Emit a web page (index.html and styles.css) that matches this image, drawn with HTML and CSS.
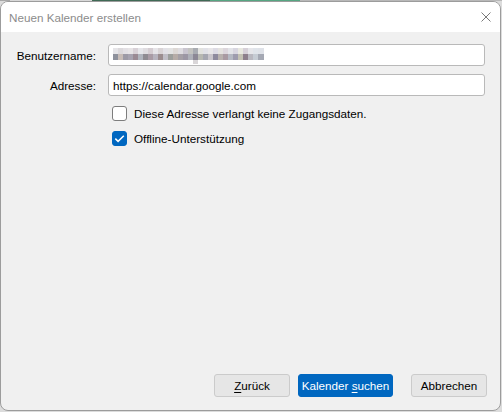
FILE: index.html
```html
<!DOCTYPE html>
<html lang="de">
<head>
<meta charset="utf-8">
<title>Neuen Kalender erstellen</title>
<link rel="stylesheet" href="styles.css">
</head>
<body>
<div class="desk-strip"></div>
<div class="window">
  <header class="titlebar">
    <span class="title">Neuen Kalender erstellen</span>
    <svg class="close" width="10" height="10" viewBox="0 0 10 10" aria-hidden="true">
      <path d="M0.5 0.5 L9.5 9.5 M9.5 0.5 L0.5 9.5" stroke="#7a7a7a" stroke-width="1" fill="none"/>
    </svg>
  </header>
  <main class="content">
    <div class="form">
      <label class="label" for="user">Benutzername:</label>
      <div class="field" id="user"><span class="mosaic"></span></div>
      <label class="label" for="addr">Adresse:</label>
      <div class="field" id="addr">https://calendar.google.com</div>
    </div>
    <div class="checks">
      <div class="check"><span class="box"></span><span>Diese Adresse verlangt keine Zugangsdaten.</span></div>
      <div class="check"><span class="box checked"><svg width="15" height="15" viewBox="0 0 15 15"><path d="M3.3 7.6 L6.1 10.4 L11.8 4.7" stroke="#fff" stroke-width="1.5" fill="none"/></svg></span><span>Offline-Unterstützung</span></div>
    </div>
  </main>
  <footer class="buttons">
    <button class="btn"><u>Z</u>urück</button>
    <button class="btn primary">Kalender <u>s</u>uchen</button>
    <button class="btn cancel">Abbrechen</button>
  </footer>
</div>
</body>
</html>
```

FILE: styles.css
```css
html, body {
  margin: 0;
  padding: 0;
}

body {
  width: 502px;
  height: 412px;
  background: #dcdcdc;
  font-family: "Segoe UI", "Liberation Sans", Arial, sans-serif;
  font-size: 11.7px;
  color: #000;
  overflow: hidden;
}

/* sliver of the window lying behind the dialog */
.desk-strip {
  height: 1px;
  background: linear-gradient(to right, #a8a8a8 0 10px, #d8d8d8 10px 92px, #3f6a55 92px 210px, #56a682 210px 300px, #b8b8b8 300px);
}

.window {
  box-sizing: border-box;
  width: 501px;
  height: 410px;
  border: 1px solid #9c9c9c;
  border-radius: 8px;
  background: #f0f0f0;
  overflow: hidden;
  display: flex;
  flex-direction: column;
}

.titlebar {
  height: 30px;
  background: #fff;
  display: flex;
  align-items: center;
  justify-content: space-between;
  padding: 0 9px 0 8px;
  flex: none;
}

.title {
  color: #8c8c8c;
  padding-top: 1px;
}

.close {
  display: block;
}

.content {
  flex: 1;
  padding-top: 12px;
}

.form {
  display: grid;
  grid-template-columns: 87px 1fr;
  column-gap: 12px;
  row-gap: 8px;
  padding: 0 15px 0 8px;
  align-items: center;
}

.label {
  text-align: right;
}

.field {
  box-sizing: border-box;
  height: 22px;
  border: 1px solid #b9b9b9;
  border-radius: 3px;
  background: #fff;
  padding: 0 4px;
  display: flex;
  align-items: center;
}

/* pixelated user name */
.mosaic {
  display: block;
  width: 151px;
  height: 16px;
  margin-top: 2px;
  background:
    linear-gradient(to right, transparent 0 80px, #d9d6d8 80px 85px, transparent 85px) 0 12px / 100% 4px no-repeat,
    linear-gradient(to right,
      #8e919c 0 5px, #c7bcb7 5px 10px, #9d9aa6 10px 15px, #a7a3b0 15px 20px, #9a8a94 20px 25px,
      #b0b4bd 25px 30px, #8f8b92 30px 35px, #a99ba5 35px 40px, #b7b3be 40px 45px, #9b8d8f 45px 50px,
      #c0bec6 50px 55px, #9d9f9c 55px 60px, #b6aca7 60px 65px, #a5a0a6 65px 70px, #9c97a4 70px 75px,
      #aeb0b8 75px 80px, #8c8895 80px 85px, #b7b8b2 85px 90px, #a6a7b1 90px 95px, #c9c5cb 95px 100px,
      #8e8a9d 100px 105px, #b8b1ae 105px 110px, #a99aa2 110px 115px, #b5b9c3 115px 120px, #9e9cae 120px 125px,
      #c3c1b4 125px 130px, #8d7f8c 130px 135px, #b9b8c0 135px 140px, #c6ccd4 140px 145px, #a5a9b4 145px 151px) 0 6px / 100% 6px no-repeat,
    linear-gradient(to right,
      #e6e5e8 0 5px, #dcd9dc 5px 10px, #e3e0e4 10px 15px, #e7e4e6 15px 20px, #d8d1d7 20px 25px,
      #e6e6ea 25px 30px, #dfdce0 30px 35px, #d5cdd2 35px 40px, #e6e4e8 40px 45px, #d9d4d6 45px 50px,
      #e2e1e6 50px 55px, #e3e3e3 55px 60px, #ddd8d5 60px 65px, #dedce0 65px 70px, #c9c5cf 70px 75px,
      #c3c3c0 75px 80px, #a9acb2 80px 85px, #e2e2df 85px 90px, #e1e1e7 90px 95px, #e8e6e8 95px 100px,
      #dddbe4 100px 105px, #e4e2df 105px 110px, #dcd6dc 110px 115px, #e3e4e8 115px 120px, #d8d6e0 120px 125px,
      #e8e8e0 125px 130px, #d6d0d8 130px 135px, #e6e6ea 135px 140px, #e0e4ea 140px 145px, #dfe2e8 145px 151px) 0 0 / 100% 6px no-repeat;
}

.checks {
  display: flex;
  flex-direction: column;
  gap: 10px;
  padding: 10px 0 0 111px;
}

.check {
  display: flex;
  align-items: center;
  gap: 7px;
  height: 15px;
}

.box {
  box-sizing: border-box;
  width: 15px;
  height: 15px;
  border: 1px solid #7d7d7d;
  border-radius: 3px;
  background: #fff;
  flex: none;
}

.box.checked {
  border-color: #0067c0;
  background: #0067c0;
}

.box.checked svg {
  display: block;
  margin: -1px;
}

.buttons {
  display: flex;
  justify-content: flex-end;
  align-items: center;
  gap: 8px;
  padding: 0 13px 13px 0;
  flex: none;
}

.btn {
  box-sizing: border-box;
  height: 23px;
  width: 76px;
  padding: 0;
  font: inherit;
  white-space: nowrap;
  color: #000;
  background: #e6e6e6;
  border: 1px solid #cbcbcb;
  border-radius: 3px;
}

.btn u {
  text-underline-offset: 2px;
}

.btn.primary {
  width: 95px;
  background: #0067c0;
  border-color: #0067c0;
  color: #fff;
}

.btn.cancel {
  margin-left: 10px;
}
```
